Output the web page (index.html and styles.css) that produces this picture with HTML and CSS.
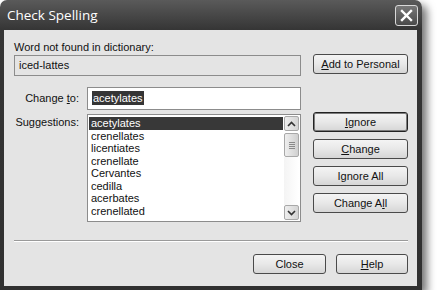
FILE: index.html
```html
<!DOCTYPE html>
<html lang="en">
<head>
  <meta charset="UTF-8" />
  <title>Check Spelling</title>
  <link rel="stylesheet" href="styles.css">
</head>
<body>
  <div class="window">
    <div class="titlebar">
      <span class="title">Check Spelling</span>
      <span class="close-x">
        <svg width="13" height="13" viewBox="0 0 13 13">
          <path d="M2 2 L11 11 M11 2 L2 11" stroke="#fff" stroke-width="2.4" stroke-linecap="square"/>
        </svg>
      </span>
    </div>

    <div class="content">
      <div class="top-label">Word not found in dictionary:</div>

      <div class="row row-word">
        <div class="word-box">iced-lattes</div>
        <button class="btn"><u>A</u>dd to Personal</button>
      </div>

      <div class="row row-change">
        <label class="side-label">Change <u>t</u>o:</label>
        <div class="change-input"><span class="sel">acetylates</span></div>
      </div>

      <div class="row row-suggest">
        <label class="side-label">Suggestions:</label>
        <div class="listbox">
          <ul class="items">
            <li class="active">acetylates</li>
            <li>crenellates</li>
            <li>licentiates</li>
            <li>crenellate</li>
            <li>Cervantes</li>
            <li>cedilla</li>
            <li>acerbates</li>
            <li>crenellated</li>
          </ul>
          <div class="scrollbar">
            <div class="sb-btn">
              <svg width="9" height="6" viewBox="0 0 9 6"><path d="M1 5 L4.5 1.5 L8 5" fill="none" stroke="#333" stroke-width="1.6"/></svg>
            </div>
            <div class="sb-thumb"><span></span><span></span><span></span><span></span></div>
            <div class="sb-track"></div>
            <div class="sb-btn">
              <svg width="9" height="6" viewBox="0 0 9 6"><path d="M1 1 L4.5 4.5 L8 1" fill="none" stroke="#333" stroke-width="1.6"/></svg>
            </div>
          </div>
        </div>
        <div class="actions">
          <button class="btn btn-default"><u>I</u>gnore</button>
          <button class="btn"><u>C</u>hange</button>
          <button class="btn">I<u>g</u>nore All</button>
          <button class="btn">Change A<u>l</u>l</button>
        </div>
      </div>

      <div class="separator"></div>

      <div class="footer">
        <button class="btn btn-close">Close</button>
        <button class="btn btn-help"><u>H</u>elp</button>
      </div>
    </div>
  </div>
</body>
</html>
```

FILE: styles.css
```css
body {
  margin: 0;
  background: #fff;
  font-family: "Liberation Sans", Arial, sans-serif;
  font-size: 11px;
  color: #111;
}

.window {
  width: 422px;
  height: 290px;
  background: linear-gradient(#5a5a5a, #353535 30px, #303030);
  border-radius: 7px 7px 0 0;
  box-shadow: 5px 5px 8px rgba(0,0,0,0.55);
  display: flex;
  flex-direction: column;
}

.titlebar {
  height: 30px;
  display: flex;
  align-items: center;
  justify-content: space-between;
  padding: 0 4px 0 7px;
}

.title {
  color: #fff;
  font-family: "Open Sans", sans-serif;
  font-size: 13.5px;
  margin-top: -1px;
}

.close-x {
  width: 21px;
  height: 19px;
  border: 1px solid #d8d8d8;
  border-radius: 3px;
  background: linear-gradient(#777, #4a4a4a);
  display: flex;
  align-items: center;
  justify-content: center;
  margin-top: 1px;
}

.content {
  flex: 1;
  margin: 0 5px 4px 4px;
  background: #e4e4e4;
  padding: 10px 9px 0 10px;
  display: flex;
  flex-direction: column;
}

.top-label {
  height: 14px;
  line-height: 14px;
}

.row {
  display: flex;
  align-items: flex-start;
}

.word-box {
  width: 287px;
  height: 21px;
  box-sizing: border-box;
  border: 1px solid #8c8c8c;
  margin-top: 1px;
  margin-right: 12px;
  padding-left: 4px;
  line-height: 19px;
}

.btn {
  font-family: inherit;
  font-size: 11px;
  color: #111;
  width: 95px;
  height: 20px;
  padding: 0;
  border: 1px solid #4a4a4a;
  border-radius: 3px;
  background: linear-gradient(#f4f4f4, #e8e8e8 50%, #d6d6d6);
  line-height: 17px;
}

.btn-default {
  border-color: #222;
  box-shadow: inset 0 0 0 1px #7c7c7c;
}

.row-change {
  margin-top: 11px;
}

.side-label {
  width: 73px;
  box-sizing: border-box;
  padding-right: 8px;
  text-align: right;
}

.row-change .side-label {
  line-height: 23px;
}

.change-input {
  width: 214px;
  height: 23px;
  box-sizing: border-box;
  border: 1px solid #8c8c8c;
  background: #fff;
  padding: 3px 0 0 4px;
}

.sel {
  background: #353535;
  color: #fff;
  display: inline-block;
  line-height: 14px;
  padding: 0 1px;
}

.row-suggest {
  margin-top: 2px;
}

.row-suggest .side-label {
  margin-top: 3px;
  line-height: 14px;
}

.listbox {
  width: 214px;
  height: 108px;
  box-sizing: border-box;
  margin-top: 2px;
  margin-right: 12px;
  border: 1px solid #8c8c8c;
  background: #fff;
  display: flex;
  padding: 1px;
}

.items {
  list-style: none;
  margin: 0;
  padding: 1px 0 0 0;
  flex: 1;
}

.items li {
  line-height: 12.5px;
  height: 12.5px;
  padding-left: 2px;
}

.items li.active {
  background: #383838;
  color: #fff;
}

.scrollbar {
  width: 15px;
  display: flex;
  flex-direction: column;
  margin-left: 1px;
}

.sb-btn {
  height: 15px;
  box-sizing: border-box;
  border: 1px solid #a8a8a8;
  border-radius: 2px;
  background: linear-gradient(90deg, #eee, #d4d4d4);
  display: flex;
  align-items: center;
  justify-content: center;
}

.sb-thumb {
  height: 24px;
  margin-top: 2px;
  box-sizing: border-box;
  border: 1px solid #a8a8a8;
  border-radius: 2px;
  background: linear-gradient(90deg, #eee, #d0d0d0);
  display: flex;
  flex-direction: column;
  align-items: center;
  justify-content: center;
  gap: 1px;
}

.sb-thumb span {
  width: 6px;
  height: 1px;
  background: #8a8a8a;
}

.sb-track {
  flex: 1;
  background: linear-gradient(90deg, #f4f4f4, #fff);
}

.actions {
  width: 95px;
  display: flex;
  flex-direction: column;
  gap: 7px;
}

.separator {
  margin-top: 18px;
  height: 1px;
  background: #9a9a9a;
  border-bottom: 1px solid #fff;
}

.footer {
  margin-top: 12px;
  display: flex;
  justify-content: flex-end;
  gap: 10px;
}

.btn-close {
  width: 73px;
}

.btn-help {
  width: 72px;
}
```
